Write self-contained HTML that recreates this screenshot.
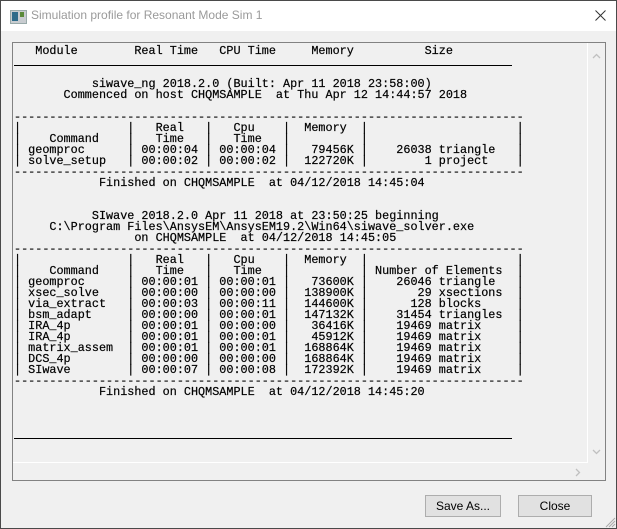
<!DOCTYPE html>
<html><head><meta charset="utf-8"><style>
html,body{margin:0;padding:0;}
body{width:617px;height:529px;position:relative;background:#f0f0f0;overflow:hidden;font-family:"Liberation Sans",sans-serif;}
.frame{position:absolute;left:0;top:0;width:615px;height:527px;border:1px solid #4a4a4a;}
.title{position:absolute;left:1px;top:1px;width:615px;height:30px;background:#fff;}
.ttext{position:absolute;left:30px;top:7px;font-size:12px;color:#9a9a9a;}
.icon{position:absolute;left:9px;top:9px;width:15px;height:12px;background:#c8ccd0;border:1px solid #9aa;}
.icon:before{content:"";position:absolute;left:1px;top:1px;width:6px;height:9px;background:#2e6b8a;}
.icon:after{content:"";position:absolute;left:9px;top:1px;width:4px;height:5px;background:#5a8a3a;}
.panel{position:absolute;left:12px;top:42px;width:592px;height:437px;border:1px solid #828282;background:#f0f0f0;overflow:hidden;}
pre{position:absolute;left:1px;top:3px;margin:0;font-family:"Liberation Mono",monospace;font-size:11.8px;line-height:11px;color:#000;-webkit-text-stroke:0.2px #000;}
.rule{position:absolute;left:1px;width:498px;height:1px;background:#000;}
.vs{position:absolute;right:0;top:0;width:17px;height:419px;}
.hs{position:absolute;left:0;bottom:0;height:17px;width:575px;}
.btn{position:absolute;top:495px;height:20px;border:1px solid #adadad;background:#e1e1e1;font-size:12px;text-align:center;line-height:20px;color:#000;}
</style></head><body>
<div class="frame"></div>
<div class="title"><div class="icon"></div><div class="ttext">Simulation profile for Resonant Mode Sim 1</div>
<svg style="position:absolute;left:594px;top:9px" width="11" height="11"><path d="M0.5 0.5L10.5 10.5M10.5 0.5L0.5 10.5" stroke="#333" stroke-width="1"/></svg></div>
<div class="panel">
<pre>   Module        Real Time   CPU Time     Memory          Size


           siwave_ng 2018.2.0 (Built: Apr 11 2018 23:58:00)
       Commenced on host CHQMSAMPLE  at Thu Apr 12 14:44:57 2018

------------------------------------------------------------------------
|               |   Real   |   Cpu    |  Memory  |                     |
|    Command    |   Time   |   Time   |          |                     |
| geomproc      | 00:00:04 | 00:00:04 |   79456K |    26038 triangle   |
| solve_setup   | 00:00:02 | 00:00:02 |  122720K |        1 project    |
------------------------------------------------------------------------
            Finished on CHQMSAMPLE  at 04/12/2018 14:45:04


           SIwave 2018.2.0 Apr 11 2018 at 23:50:25 beginning
     C:\Program Files\AnsysEM\AnsysEM19.2\Win64\siwave_solver.exe
                 on CHQMSAMPLE  at 04/12/2018 14:45:05
------------------------------------------------------------------------
|               |   Real   |   Cpu    |  Memory  |                     |
|    Command    |   Time   |   Time   |          | Number of Elements  |
| geomproc      | 00:00:01 | 00:00:01 |   73600K |    26046 triangle   |
| xsec_solve    | 00:00:00 | 00:00:00 |  138900K |       29 xsections  |
| via_extract   | 00:00:03 | 00:00:11 |  144600K |      128 blocks     |
| bsm_adapt     | 00:00:00 | 00:00:01 |  147132K |    31454 triangles  |
| IRA_4p        | 00:00:01 | 00:00:00 |   36416K |    19469 matrix     |
| IRA_4p        | 00:00:01 | 00:00:01 |   45912K |    19469 matrix     |
| matrix_assem  | 00:00:01 | 00:00:01 |  168864K |    19469 matrix     |
| DCS_4p        | 00:00:00 | 00:00:00 |  168864K |    19469 matrix     |
| SIwave        | 00:00:07 | 00:00:08 |  172392K |    19469 matrix     |
------------------------------------------------------------------------
            Finished on CHQMSAMPLE  at 04/12/2018 14:45:20
</pre>
<div class="rule" style="top:22px"></div>
<div class="rule" style="top:395px"></div>
<div class="vs"><svg style="position:absolute;left:4px;top:10px" width="9" height="6"><path d="M1 5L4.5 1.5L8 5" stroke="#c0c0c0" fill="none" stroke-width="1.3"/></svg>
<svg style="position:absolute;left:4px;top:406px" width="9" height="6"><path d="M1 1L4.5 4.5L8 1" stroke="#c0c0c0" fill="none" stroke-width="1.3"/></svg></div>
<div class="hs"><svg style="position:absolute;left:562px;top:5px" width="6" height="9"><path d="M1 1L4.5 4.5L1 8" stroke="#c0c0c0" fill="none" stroke-width="1.3"/></svg></div>
<div style="position:absolute;left:0;top:419px;width:575px;height:1px;background:#fff"></div>
<div style="position:absolute;left:574px;top:0;width:1px;height:420px;background:#fff"></div>
</div>
<div class="btn" style="left:425px;width:74px">Save As...</div>
<div class="btn" style="left:518px;width:72px">Close</div>
<svg style="position:absolute;left:604px;top:516px" width="12" height="12"><path d="M11 2L2 11M11 5L5 11M11 8L8 11" stroke="#aaa" stroke-width="1"/></svg>
</body></html>
